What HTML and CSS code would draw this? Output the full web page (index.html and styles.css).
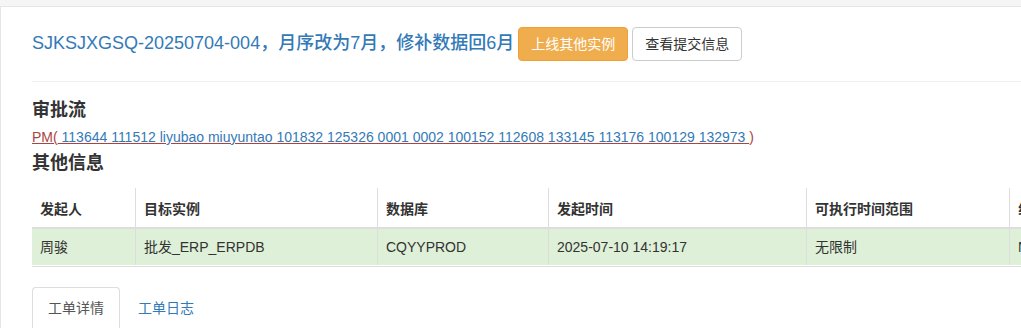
FILE: index.html
```html
<!DOCTYPE html>
<html lang="zh-CN">
<head>
<meta charset="utf-8">
<title>工单详情</title>
<link rel="stylesheet" href="styles.css">
</head>
<body>
<div class="panel">
  <div class="title-row">
    <span class="title">SJKSJXGSQ-20250704-004，月序改为7月，修补数据回6月</span>
    <button class="btn btn-warning">上线其他实例</button>
    <button class="btn btn-default">查看提交信息</button>
  </div>
  <hr class="divider">
  <h4 class="section-title first">审批流</h4>
  <div class="flow"><span class="flow-red"><span class="flow-u">PM(<span class="flow-names"> 113644 111512 liyubao miuyuntao 101832 125326 0001 0002 100152 112608 133145 113176 100129 132973 </span></span>)</span></div>
  <h4 class="section-title second">其他信息</h4>
  <div class="info-table">
    <div class="grid">
      <div class="th">发起人</div>
      <div class="th col-b">目标实例</div>
      <div class="th col-b">数据库</div>
      <div class="th col-b">发起时间</div>
      <div class="th col-b">可执行时间范围</div>
      <div class="th col-b">组</div>
      <div class="td">周骏</div>
      <div class="td col-b">批发_ERP_ERPDB</div>
      <div class="td col-b">CQYYPROD</div>
      <div class="td col-b">2025-07-10 14:19:17</div>
      <div class="td col-b">无限制</div>
      <div class="td col-b">NCC</div>
    </div>
  </div>
  <ul class="tabs">
    <li class="tab active">工单详情</li>
    <li class="tab link">工单日志</li>
  </ul>
</div>
</body>
</html>
```

FILE: styles.css
```css
html, body {
  margin: 0;
  padding: 0;
}
body {
  background: #f5f5f5;
  padding-top: 6px;
  overflow: hidden;
  font-family: "Liberation Sans", "Noto Sans CJK SC", sans-serif;
  font-size: 14px;
  line-height: 20px;
  color: #333;
}
.panel {
  background: #fff;
  border-top: 1px solid #e6e6e6;
  border-left: 1px solid #e6e6e6;
  padding: 0 0 40px 31px;
  width: 1400px;
}
.title-row {
  display: flex;
  align-items: baseline;
  padding-top: 20px;
}
.title {
  font-size: 18px;
  line-height: 1.1;
  font-weight: 500;
  color: #337ab7;
}
.btn {
  font-family: inherit;
  font-size: 14px;
  line-height: 20px;
  padding: 6px 12px;
  border: 1px solid;
  border-radius: 4px;
  cursor: pointer;
}
.btn-warning {
  margin-left: 4px;
  background: #f0ad4e;
  border-color: #eea236;
  color: #fff;
}
.btn-default {
  margin-left: 4px;
  background: #fff;
  border-color: #ccc;
  color: #333;
}
.divider {
  margin: 20px 0 19px;
  border: 0;
  border-top: 1px solid #eee;
  height: 0;
}
.section-title {
  font-size: 18px;
  line-height: 19.8px;
  font-weight: 700;
  color: #333;
  margin: 0;
}
.section-title.first {
  margin-bottom: 6px;
}
.section-title.second {
  margin-top: 7px;
  margin-bottom: 14px;
}
.flow {
  font-size: 14px;
  line-height: 20px;
}
.flow-red {
  color: #a94442;
}
.flow-u {
  text-decoration: underline;
  text-decoration-color: #a94442;
}
.flow-names {
  color: #337ab7;
}
.info-table {
  border-bottom: 1px solid #ddd;
  padding-bottom: 1px;
}
.grid {
  display: grid;
  grid-template-columns: 103px 242px 171px 258px 203px 240px;
}
.th, .td {
  box-sizing: border-box;
  white-space: nowrap;
  overflow: hidden;
}
.th {
  font-weight: 700;
  padding: 11px 8px 8px;
  border-bottom: 2px solid #ddd;
}
.td {
  padding: 8px;
  background: #dff0d8;
}
.col-b {
  border-left: 1px solid #ddd;
}
.tabs {
  list-style: none;
  margin: 20px 0 0;
  padding: 0;
  display: flex;
  gap: 2px;
  border-bottom: 1px solid #ddd;
}
.tab {
  padding: 10px 15px;
  border: 1px solid transparent;
  border-radius: 4px 4px 0 0;
  margin-bottom: -1px;
}
.tab.link {
  color: #337ab7;
}
.tab.active {
  color: #555;
  border-color: #ddd;
  border-bottom-color: transparent;
  background: #fff;
}
```
